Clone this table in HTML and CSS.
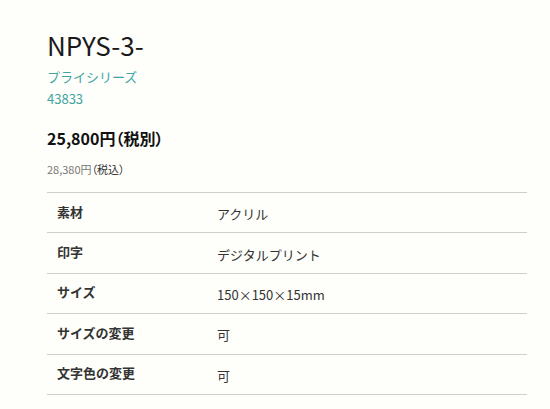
FILE: index.html
```html
<!DOCTYPE html>
<html lang="ja">
<head>
<meta charset="utf-8">
<title>NPYS-3-</title>
<link rel="stylesheet" href="styles.css">
</head>
<body>
<main class="product">
  <h1 class="product-title">NPYS-3-</h1>
  <p class="product-series">プライシリーズ</p>
  <p class="product-code">43833</p>
  <p class="price">25,800円（税別）</p>
  <p class="price-tax"><span class="price-tax-num">28,380円</span>（税込）</p>
  <table class="spec">
    <tbody>
      <tr><th>素材</th><td>アクリル</td></tr>
      <tr><th>印字</th><td>デジタルプリント</td></tr>
      <tr><th>サイズ</th><td>150×150×15mm</td></tr>
      <tr><th>サイズの変更</th><td>可</td></tr>
      <tr><th>文字色の変更</th><td>可</td></tr>
    </tbody>
  </table>
</main>
</body>
</html>
```

FILE: styles.css
```css
html, body {
  margin: 0;
  padding: 0;
  background: #fefefa;
}
body {
  font-family: "Noto Sans CJK JP", "Noto Sans", sans-serif;
  color: #222;
}
.product {
  padding: 27px 23px 0 47px;
}
.product p { margin: 0; }
.product-title {
  margin: 0;
  font-size: 26px;
  font-weight: 400;
  line-height: 36px;
  color: #1a1a1a;
}
.product-series {
  margin-top: 3px !important;
  font-size: 13px;
  line-height: 22px;
  color: #3fa5a1;
}
.product-code {
  font-size: 13px;
  line-height: 22px;
  color: #3fa5a1;
}
.price {
  margin-top: 16px !important;
  font-size: 16px;
  font-weight: 700;
  line-height: 24px;
  color: #111;
  font-feature-settings: "palt";
}
.price-tax {
  margin-top: 10px !important;
  font-size: 11px;
  line-height: 18px;
  color: #333;
  font-feature-settings: "palt";
}
.price-tax-num { color: #777; }
.spec {
  margin-top: 14px;
  width: 480px;
  border-collapse: collapse;
  border-top: 1px solid #cfcfcc;
}
.spec tr { border-bottom: 1px solid #cfcfcc; }
.spec th, .spec td {
  height: 40.4px;
  padding: 0 10px;
  box-sizing: border-box;
  font-size: 13px;
  text-align: left;
  vertical-align: middle;
}
.spec th {
  width: 160px;
  font-weight: 700;
  color: #333;
  padding-bottom: 3px;
}
.spec td {
  font-weight: 400;
  color: #333;
  padding-top: 2px;
}
```
